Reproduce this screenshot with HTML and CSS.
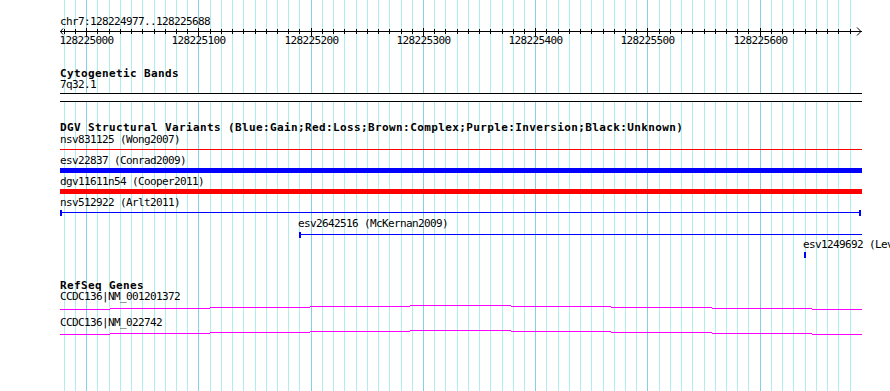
FILE: index.html
```html
<!DOCTYPE html>
<html lang="en">
<head>
    <meta charset="UTF-8">
    <title>chr7:128224977..128225688</title>
    <link rel="stylesheet" href="styles.css">
</head>
<body>
    <div class="browser">
        <svg class="grid" id="grid" width="890" height="391"></svg>

        <div class="tracks">
            <div class="label">chr7:128224977..128225688</div>
            <svg class="ruler" id="ruler" width="890" height="20"></svg>

            <div class="title cyto-title">Cytogenetic Bands</div>
            <div class="label">7q32.1</div>
            <div class="band"></div>

            <div class="title dgv-title">DGV Structural Variants (Blue:Gain;Red:Loss;Brown:Complex;Purple:Inversion;Black:Unknown)</div>
            <div class="label mt1">nsv831125 (Wong2007)</div>
            <div class="bar thin loss" style="margin-left:60px;width:802px"></div>
            <div class="label mt5">esv22837 (Conrad2009)</div>
            <div class="bar thick gain" style="margin-left:60px;width:802px"></div>
            <div class="label mt3">dgv11611n54 (Cooper2011)</div>
            <div class="bar thick loss" style="margin-left:60px;width:802px"></div>
            <div class="label mt3">nsv512922 (Arlt2011)</div>
            <div class="span both mt2" style="margin-left:60px;width:801px"></div>
            <div class="label mt2" style="padding-left:298px">esv2642516 (McKernan2009)</div>
            <div class="span mt3" style="margin-left:299px;width:563px"></div>
            <div class="label mt1" style="padding-left:803px">esv1249692 (Levy2007)</div>
            <div class="tick mt2" style="margin-left:804px"></div>

            <div class="title refseq-title">RefSeq Genes</div>
            <div class="label">CCDC136|NM_001201372</div>
            <svg class="hat mt2" width="890" height="8"></svg>
            <div class="label mt5">CCDC136|NM_022742</div>
            <svg class="hat mt1" width="890" height="8"></svg>
        </div>
    </div>

    <script>
        const NS = 'http://www.w3.org/2000/svg';
        const grid = document.getElementById('grid');
        const ruler = document.getElementById('ruler');

        function rect(parent, x, y, w, h, fill) {
            const r = document.createElementNS(NS, 'rect');
            r.setAttribute('x', x);
            r.setAttribute('y', y);
            r.setAttribute('width', w);
            r.setAttribute('height', h);
            r.setAttribute('fill', fill);
            parent.appendChild(r);
        }

        // grid lines + ruler ticks, every 10 bp
        for (let bp = 128224980; bp <= 128225680; bp += 10) {
            const x = Math.floor(86.7 + (bp - 128225000) * 1.1225);
            const major = bp % 100 === 0;
            rect(grid, x, 0, 1, 391, major ? '#87ceeb' : '#afeeee');
            rect(ruler, x, major ? 1 : 2, 1, major ? 8 : 5, '#000');
            if (major) {
                const t = document.createElementNS(NS, 'text');
                t.setAttribute('x', x + 0.5);
                t.setAttribute('y', 17);
                t.setAttribute('text-anchor', 'middle');
                t.textContent = bp;
                ruler.appendChild(t);
            }
        }

        // ruler line and arrow heads
        rect(ruler, 60, 4, 802, 1, '#000');
        [['63,1.5 60.5,4.5 63,7.5'], ['857,0.5 861,4.5 857,8.5']].forEach(([pts]) => {
            const p = document.createElementNS(NS, 'polyline');
            p.setAttribute('points', pts);
            p.setAttribute('class', 'arrow');
            ruler.appendChild(p);
        });

        // intron "hat" connecting the exons outside the view
        const HAT = [[60, 110, 4], [110, 210, 3], [210, 310, 2], [310, 410, 1], [410, 511, 0],
                     [511, 611, 1], [611, 712, 2], [712, 812, 3], [812, 862, 4]];
        document.querySelectorAll('.hat').forEach(svg => {
            HAT.forEach(([x0, x1, dy]) => rect(svg, x0, 1 + dy, x1 - x0, 1, '#ff00ff'));
        });
    </script>
</body>
</html>
```

FILE: styles.css
```css
body {
    margin: 0;
    padding: 0;
    background-color: #fff;
    color: #000;
    font-family: "DejaVu Sans Mono", "Liberation Mono", monospace;
    overflow: hidden;
}

.browser {
    position: relative;
    width: 890px;
    height: 391px;
    overflow: hidden;
}

.grid {
    position: absolute;
    top: 0;
    left: 0;
}

.tracks {
    position: relative;
    padding-top: 16px;
}

.label {
    font-size: 11px;
    line-height: 11px;
    letter-spacing: -0.62px;
    padding-left: 60px;
    white-space: nowrap;
}

.title {
    font-size: 11px;
    line-height: 11px;
    font-weight: bold;
    letter-spacing: 0.38px;
    padding-left: 60px;
    white-space: nowrap;
}

.cyto-title { margin-top: 21px; }
.dgv-title { margin-top: 20px; }
.refseq-title { margin-top: 22px; }

.mt1 { margin-top: 1px; }
.mt2 { margin-top: 2px; }
.mt3 { margin-top: 3px; }
.mt5 { margin-top: 5px; }

.ruler {
    display: block;
}

.ruler text {
    font-family: "DejaVu Sans Mono", "Liberation Mono", monospace;
    font-size: 11px;
    letter-spacing: -0.62px;
    fill: #000;
}

.ruler .arrow {
    fill: none;
    stroke: #000;
    stroke-width: 1;
}

.band {
    box-sizing: border-box;
    margin: 3px 0 0 60px;
    width: 802px;
    height: 9px;
    border-top: 1px solid #000;
    border-bottom: 1px solid #000;
    background-color: #fff;
}

.bar.thin {
    height: 1px;
    margin-top: 4px;
}

.bar.thick {
    height: 5px;
    margin-top: 2px;
}

.gain { background-color: #00f; }
.loss { background-color: #f00; }

.span {
    box-sizing: border-box;
    height: 6px;
    border-left: 2px solid #00f;
    background: linear-gradient(#00f, #00f) 0 2px / 100% 1px no-repeat;
}

.span.both {
    border-right: 2px solid #00f;
}

.tick {
    width: 2px;
    height: 6px;
    background-color: #00f;
}

.hat {
    display: block;
}
```
